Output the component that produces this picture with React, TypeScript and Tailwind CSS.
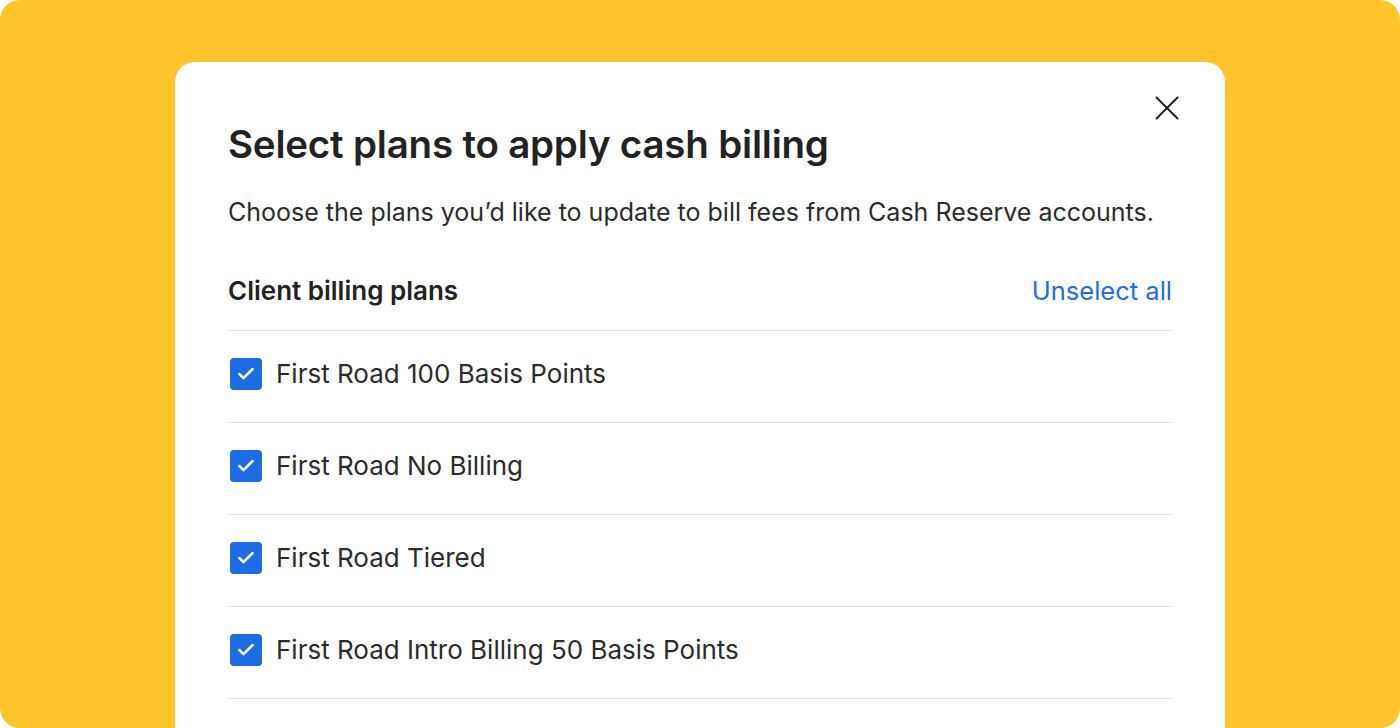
import { Check } from "lucide-react";

const plans = [
  "First Road 100 Basis Points",
  "First Road No Billing",
  "First Road Tiered",
  "First Road Intro Billing 50 Basis Points",
];

export default function App() {
  return (
    <div className="w-[1400px] h-[728px] bg-white" style={{ fontFamily: "Inter, 'Noto Sans', sans-serif" }}>
      <div className="w-full h-full rounded-[20px] overflow-hidden bg-[#fec42c] pt-[62px] px-[175px]">
        <div className="relative h-full bg-white rounded-t-[20px] px-[53px] pt-[58px] text-[#222]">
          {/* Close */}
          <button className="absolute top-[34px] right-[46px] text-[#222]">
            <svg width="24" height="24" viewBox="0 0 24 24" fill="none" stroke="currentColor" strokeWidth="2" strokeLinecap="round">
              <line x1="1.5" y1="1.5" x2="22.5" y2="22.5" />
              <line x1="22.5" y1="1.5" x2="1.5" y2="22.5" />
            </svg>
          </button>

          <h1 className="text-[38.5px] leading-[48px] font-semibold tracking-[-0.2px]">
            Select plans to apply cash billing
          </h1>
          <p className="mt-[28px] text-[25px] leading-[32px] text-[#2b2b2b]">
            Choose the plans you’d like to update to bill fees from Cash Reserve accounts.
          </p>

          <div className="mt-[47px] flex items-center justify-between pb-[23px] border-b border-[#e3e3e3]">
            <h2 className="text-[26px] leading-[32px] font-semibold">Client billing plans</h2>
            <a href="#" className="text-[25.5px] leading-[32px] text-[#1b6fe3]">
              Unselect all
            </a>
          </div>

          <ul>
            {plans.map((plan) => (
              <li key={plan} className="flex items-center gap-[14px] h-[92px] pb-[5px] border-b border-[#e3e3e3]">
                <span className="ml-[2px] w-[32px] h-[32px] rounded-[4px] bg-[#1d6ce3] flex items-center justify-center">
                  <Check size={20} strokeWidth={3} className="text-white" />
                </span>
                <span className="text-[26px] leading-[32px] text-[#2b2b2b]">{plan}</span>
              </li>
            ))}
          </ul>
        </div>
      </div>
    </div>
  );
}
